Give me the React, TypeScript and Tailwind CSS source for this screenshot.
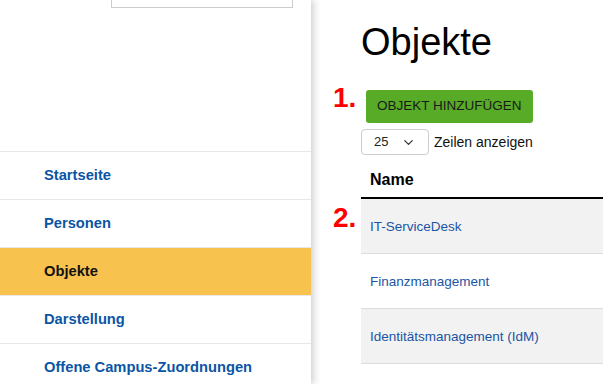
import React from 'react';
import { ChevronDown } from 'lucide-react';

const navItems = [
    { label: 'Startseite', active: false },
    { label: 'Personen', active: false },
    { label: 'Objekte', active: true },
    { label: 'Darstellung', active: false },
    { label: 'Offene Campus-Zuordnungen', active: false },
];

const rows = ['IT-ServiceDesk', 'Finanzmanagement', 'Identitätsmanagement (IdM)'];

const App: React.FC = () => {
    return (
        <div className="flex h-[384px] w-[603px] overflow-hidden bg-white font-['Liberation_Sans',Arial,sans-serif]">
            {/* Sidebar */}
            <aside className="relative z-10 flex w-[311px] shrink-0 flex-col bg-white shadow-[3px_0_7px_rgba(0,0,0,0.18)]">
                <div className="ml-[111px] h-[8px] w-[182px] shrink-0 border-x border-b border-[#cccccc]"></div>
                <nav className="mt-[143px] flex shrink-0 flex-col">
                    {navItems.map((item) => (
                        <div
                            key={item.label}
                            className={`flex h-[48px] shrink-0 items-center border-t border-[#e8e8e8] pl-[44px] text-[14.7px] font-bold ${
                                item.active ? 'bg-[#f8c24f] text-[#111]' : 'text-[#0b55a5]'
                            }`}
                        >
                            {item.label}
                        </div>
                    ))}
                </nav>
            </aside>

            {/* Main */}
            <main className="relative flex-1 pl-[50px]">
                <h1 className="mt-[23px] text-[38px] leading-none font-normal text-black">Objekte</h1>

                <span className="absolute left-[22px] top-[84px] text-[28px] leading-none font-bold text-[#ff0000]">1.</span>
                <button className="mt-[29px] ml-[5px] flex h-[33px] items-center rounded-[3px] bg-[#57ab27] px-[11px] text-[13.5px] text-[#1a1a1a]">
                    OBJEKT HINZUFÜGEN
                </button>

                <div className="mt-[6px] flex items-center gap-[5px]">
                    <div className="flex h-[26px] w-[68px] items-center justify-between rounded-[4px] border border-[#cccccc] pl-[12px] pr-[12px] text-[13px] text-[#222]">
                        <span>25</span>
                        <ChevronDown size={15} strokeWidth={2} className="text-[#333]" />
                    </div>
                    <span className="text-[14px] text-[#111]">Zeilen anzeigen</span>
                </div>

                <div className="flex h-[44px] items-center border-b-2 border-black pl-[9px] pt-[7px] text-[16px] font-bold text-black">
                    Name
                </div>

                <span className="absolute left-[22px] top-[204px] text-[28px] leading-none font-bold text-[#ff0000]">2.</span>
                {rows.map((row, i) => (
                    <div
                        key={row}
                        className={`flex h-[55px] items-center border-b border-[#dddddd] pl-[9px] pt-[3px] text-[13.5px] text-[#1a55a5] ${
                            i % 2 === 0 ? 'bg-[#f2f2f2]' : 'bg-white'
                        }`}
                    >
                        {row}
                    </div>
                ))}
            </main>
        </div>
    );
};

export default App;
